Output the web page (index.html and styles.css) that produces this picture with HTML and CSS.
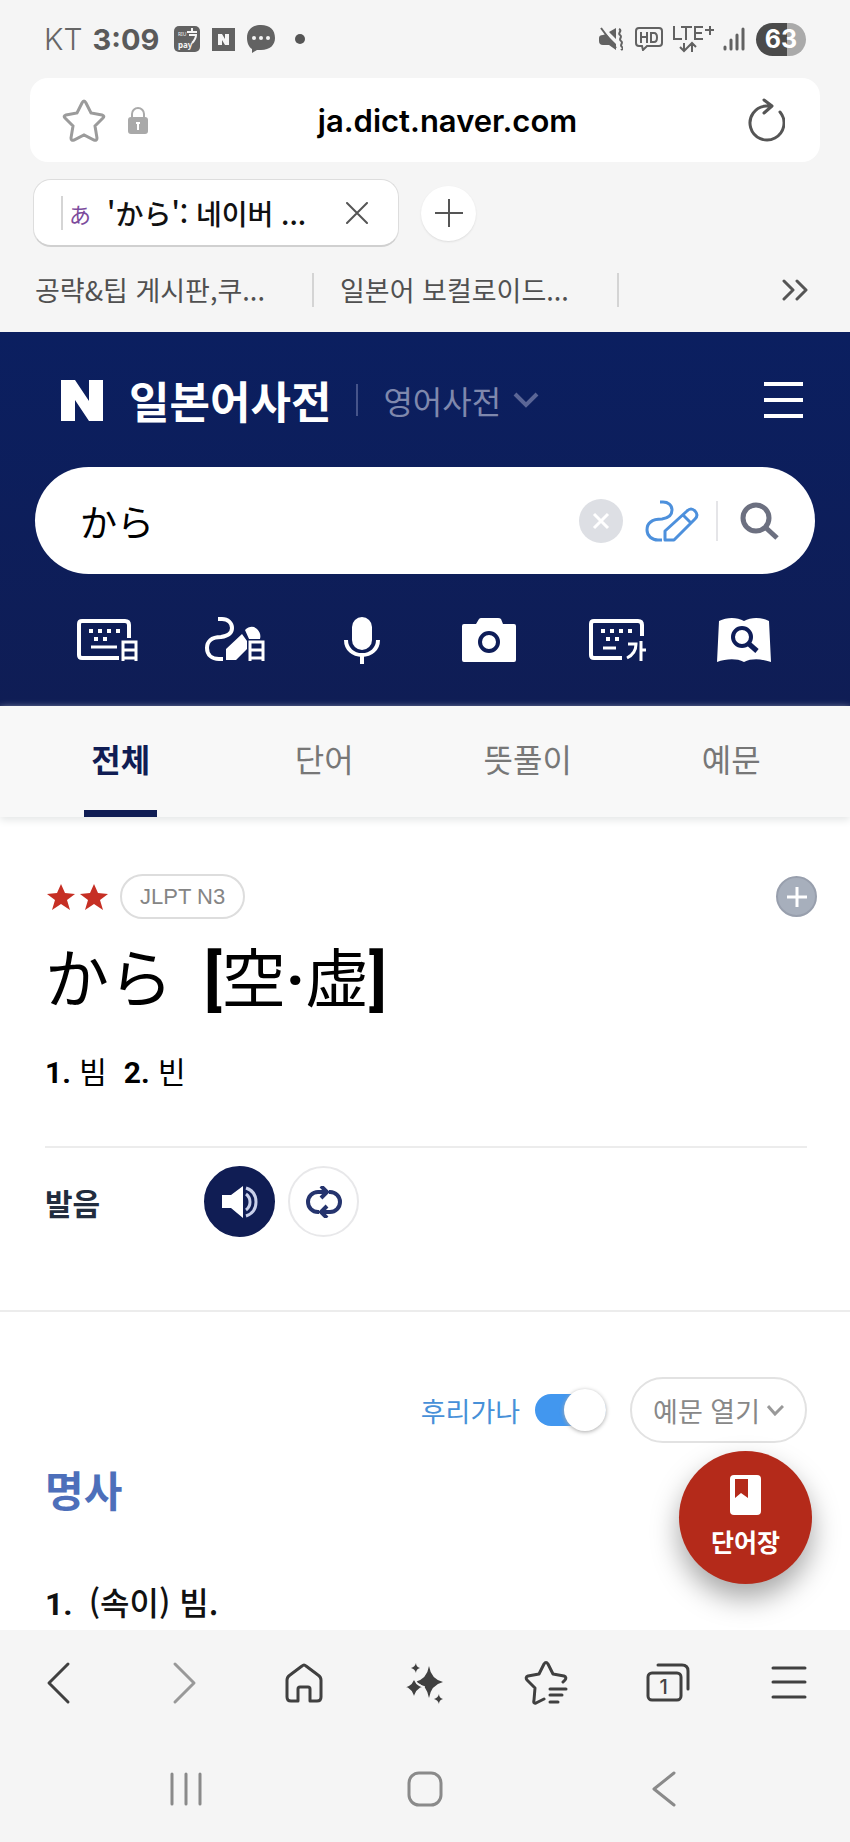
FILE: index.html
```html
<!DOCTYPE html>
<html lang="ko">
<head>
<meta charset="utf-8">
<meta name="viewport" content="width=device-width, initial-scale=1">
<title>'から': 네이버 일본어사전</title>
<link rel="stylesheet" href="styles.css">
</head>
<body>
<div class="screen">
  <div class="chrome">
    <div class="status">
      <span class="carrier">KT</span>
      <span class="time">3:09</span>
      <svg class="st-pay" width="26" height="26" viewBox="0 0 26 26"><rect width="26" height="26" rx="5" fill="#626262"/><path d="M13 6h10M18 2v4M15 9h7c0 4-2 6-4 8" fill="none" stroke="#f5f5f5" stroke-width="2"/><text x="4" y="10" class="pay-small">RIU</text><text x="4" y="22" class="pay-text">pay</text></svg>
      <svg class="st-n" width="23" height="23" viewBox="0 0 23 23"><path fill="#626262" d="M0 0h23v23H0z"/><path fill="#f5f5f5" d="M6 6h4l3 5V6h4v11h-4l-3-5v5H6z"/></svg>
      <svg class="st-chat" width="28" height="28" viewBox="0 0 28 28"><path fill="#626262" d="M14 0c9 0 14 5 14 13 0 7-5 12-14 12h-4l-5 3v-4C2 22 0 18 0 13 0 5 5 0 14 0z"/><g fill="#f5f5f5"><circle cx="7" cy="13" r="2"/><circle cx="14" cy="13" r="2"/><circle cx="21" cy="13" r="2"/></g></svg>
      <svg class="st-dot" width="10" height="10" viewBox="0 0 10 10"><circle cx="5" cy="5" r="5" fill="#555"/></svg>
      <span class="grow"></span>
      <svg width="24" height="24" viewBox="0 0 24 24" fill="#626262"><path d="M0 11q0-3 4-3l3-1 10 10v6l-7-5H4q-4 0-4-4zM10 5l7-4v11z"/><path d="M2 1l15 20M20 2c4 2-2 4 1 6s-2 4 1 6-2 4 1 6 0 2-1 3" fill="none" stroke="#626262" stroke-width="2"/></svg>
      <svg class="st-hd" width="28" height="24" viewBox="0 0 28 24"><path d="M4 1h20q3 0 3 3v12q0 3-3 3H12l-4 4-1-4H4q-3 0-3-3V4q0-3 3-3z" fill="none" stroke="#626262" stroke-width="2"/><path d="M6 5v11M6 10h6M12 5v11M16 6v9h3q3 0 3-4.500t-3-4.500z" fill="none" stroke="#626262" stroke-width="2"/></svg>
      <svg class="st-lte" width="43" height="28" viewBox="0 0 43 28" fill="none" stroke="#626262" stroke-width="2"><path d="M2 1v13h8M9 2h11M14 2v13M31 2h-8v12h8M23 8h7M33 5h9M38 1v9"/><path d="M12 18v8M8 22l4 4 4-4M20 27v-8M16 22l4-4 4 4"/></svg>
      <svg class="st-sig" width="22" height="24" viewBox="0 0 22 24" fill="none" stroke="#626262" stroke-width="3" stroke-linecap="round"><path d="M2 20v2M8 13v9M14 8v14M20 2v20"/></svg>
      <span class="battery">63</span>
    </div>

    <div class="address">
      <button class="plain" aria-label="북마크"><svg width="44" height="44" viewBox="0 0 44 44"><path d="M22 3q1 0 2 2l5 10 11 2q3 1 1 3l-8 8 2 12q0 3-3 2l-10-5-10 5q-3 1-3-2l2-12-8-8q-2-2 1-3l11-2 5-10q1-2 2-2z" fill="none" stroke="#9b9b9b" stroke-width="3"/></svg></button>
      <svg class="lock" width="20" height="28" viewBox="0 0 20 28"><path d="M4 12V8a6 6 0 0 1 12 0v4" fill="none" stroke="#aaa" stroke-width="2"/><rect y="11" width="20" height="17" rx="3" fill="#a9a9a9"/><path d="M8 16h4v2h-1v6H9v-6H8z" fill="#fff"/></svg>
      <a class="url" href="#">ja.dict.naver.com</a>
      <button class="plain" aria-label="새로고침"><svg width="38" height="44" viewBox="0 0 38 44" fill="none" stroke="#555" stroke-width="3" stroke-linecap="round" stroke-linejoin="round"><path d="M33 14a17 17 0 1 1-14-6h5M17 2l8 6-8 7"/></svg></button>
    </div>

    <div class="tabs">
      <div class="tab">
        <span class="fav" lang="ja">あ</span>
        <span class="tab-title">'から': 네이버 ...</span>
        <button class="plain" aria-label="탭 닫기"><svg width="22" height="22" viewBox="0 0 22 22" stroke="#555" stroke-width="2" stroke-linecap="round"><path d="M1 1l20 20M21 1L1 21"/></svg></button>
      </div>
      <button class="newtab" aria-label="새 탭"><svg width="28" height="28" viewBox="0 0 28 28" stroke="#555" stroke-width="2"><path d="M14 0v28M0 14h28"/></svg></button>
    </div>

    <div class="bookmarks">
      <a href="#">공략&amp;팁 게시판,쿠...</a>
      <a href="#">일본어 보컬로이드...</a>
      <button class="plain" aria-label="더보기"><svg width="26" height="22" viewBox="0 0 26 22" fill="none" stroke="#555" stroke-width="3" stroke-linecap="round" stroke-linejoin="round"><path d="M2 2l9 9-9 9M15 2l9 9-9 9"/></svg></button>
    </div>
  </div>

  <header class="head">
    <div class="brand">
      <svg width="42" height="41" viewBox="0 0 42 41"><path fill="#fff" d="M0 0h14l14 21V0h14v41H28L14 20v21H0z"/></svg>
      <h1>일본어사전</h1>
      <button class="plain other">영어사전 <svg width="26" height="18" viewBox="0 0 26 18" fill="none" stroke="#5b6696" stroke-width="4"><path d="M2 3l11 11L24 3"/></svg></button>
      <button class="plain menu" aria-label="메뉴"><svg width="39" height="36" viewBox="0 0 39 36" stroke="#fff" stroke-width="4"><path d="M0 2h39M0 18h39M0 34h39"/></svg></button>
    </div>
    <div class="search">
      <input type="text" value="から" aria-label="검색어" lang="ja">
      <button class="clear" aria-label="지우기"><svg width="18" height="18" viewBox="0 0 18 18" stroke="#fff" stroke-width="3"><path d="M2 2l14 14M16 2L2 16"/></svg></button>
      <button class="plain pen" aria-label="필기"><svg width="54" height="42" viewBox="0 0 54 42" fill="none" stroke="#4d90dc" stroke-width="3" stroke-linejoin="round"><path d="M15 2h3c5 0 9 3 9 8s-3 8-10 9C6 19 2 23 2 30c0 6 5 10 11 10h4"/><path d="M20 40v-9l22-20q4-4 8 0t0 8L29 40zM38 15l8 8"/></svg></button>
      <button class="plain go" aria-label="검색"><svg width="40" height="38" viewBox="0 0 40 38" fill="none" stroke="#6c7080" stroke-width="5"><circle cx="17" cy="16" r="13"/><path d="M26 25l12 11"/></svg></button>
    </div>
    <div class="tools">
      <button class="plain" aria-label="일본어 키보드"><svg width="62" height="48" viewBox="0 0 62 48" fill="none" stroke="#fff" stroke-width="4"><path d="M43 42H6q-3 0-3-3V8q0-3 3-3h43q4 0 4 4v13"/><path stroke-width="3" d="M15 31h26"/><path d="M13 15h4M22 15h4M31 15h4M40 15h4M18 23h4M27 23h4"/><path stroke-width="3" d="M47 45V26h13v19M47 34h13M47 42h13"/></svg></button>
      <button class="plain" aria-label="일본어 필기"><svg width="62" height="48" viewBox="0 0 62 48"><path d="M15 3h4c6 0 10 4 10 9s-4 8-11 9C8 21 4 26 4 32c0 7 5 11 12 11h4" fill="none" stroke="#fff" stroke-width="4"/><path fill="#fff" d="M23 33l16-15 5 7v8L33 44H23zM42 14c4-4 9-4 12-1s4 6 3 10H46z"/><path d="M47 45V26h13v19M47 34h13M47 42h13" fill="none" stroke="#fff" stroke-width="3"/></svg></button>
      <button class="plain" aria-label="음성 검색"><svg width="36" height="48" viewBox="0 0 36 48"><rect x="8" y="1" width="20" height="33" rx="10" fill="#fff"/><path d="M2 24c0 9 7 15 16 15s16-6 16-15M18 39v9" fill="none" stroke="#fff" stroke-width="4"/></svg></button>
      <button class="plain" aria-label="사진 검색"><svg width="54" height="48" viewBox="0 0 54 48"><path fill="#fff" d="M2 8h12l3-5q1-1 2-1h17q2 0 3 1l2 5h11q2 0 2 2v34q0 2-2 2H2q-2 0-2-2V10q0-2 2-2z"/><circle cx="27" cy="26" r="9" fill="#fff" stroke="#0e1d58" stroke-width="4"/></svg></button>
      <button class="plain" aria-label="한글 키보드"><svg width="58" height="48" viewBox="0 0 58 48" fill="none" stroke="#fff" stroke-width="4"><path d="M34 42H6q-3 0-3-3V8q0-3 3-3h44q4 0 4 4v11"/><path stroke-width="3" d="M15 32h13"/><path d="M13 15h4M22 15h4M31 15h4M40 15h4M18 23h4M27 23h4"/><path stroke-width="3" d="M40 28h8c0 6-3 11-9 14M53 25v20M53 34h5"/></svg></button>
      <button class="plain" aria-label="사전 검색"><svg width="54" height="48" viewBox="0 0 54 48"><path fill="#fff" d="M2 5c8-4 18-4 25 0 7-4 17-4 25 0l2 41c-9-3-19-4-27 0-8-4-18-3-27 0z"/><circle cx="25" cy="21" r="9" fill="none" stroke="#0e1d58" stroke-width="4"/><path d="M32 28l8 7" stroke="#0e1d58" stroke-width="5"/></svg></button>
    </div>
  </header>

  <nav class="sections">
    <a class="on" href="#">전체</a><a href="#">단어</a><a href="#">뜻풀이</a><a href="#">예문</a>
  </nav>

  <main>
    <section class="entry">
      <div class="meta">
        <svg width="63" height="26" viewBox="0 0 63 26" fill="#c62f24"><path d="M16 0l4 9 10 1-8 6 3 10-9-6-9 6 3-10-8-6 10-1zM49 0l4 9 10 1-8 6 3 10-9-6-9 6 3-10-8-6 10-1z"/></svg>
        <span class="level">JLPT N3</span>
        <button class="add" aria-label="단어장에 추가"><svg width="20" height="20" viewBox="0 0 20 20" stroke="#fff" stroke-width="3"><path d="M10 0v20M0 10h20"/></svg></button>
      </div>
      <h2 class="word" lang="ja">から<span class="kanji"><b>[</b>空<b>·</b>虚<b>]</b></span></h2>
      <p class="gloss"><b>1.</b> 빔&nbsp; <b>2.</b> 빈</p>
      <div class="sound">
        <span class="sound-label">발음</span>
        <button class="round play" aria-label="발음 듣기"><svg width="36" height="32" viewBox="0 0 36 32"><path fill="#fff" d="M0 9h9L21 0v32L9 22H0z"/><path d="M24 2c6 2 10 7 10 14s-4 12-10 14M24 8q4 3 4 8t-4 8" fill="none" stroke="#c9d0ea" stroke-width="3"/></svg></button>
        <button class="round" aria-label="반복 듣기"><svg width="36" height="32" viewBox="0 0 36 32" fill="none" stroke="#25346e" stroke-width="4"><path d="M13 26h-1a10 10 0 0 1 0-20h8M15 0l6 6-6 6M23 6h1a10 10 0 0 1 0 20h-8M21 20l-6 6 6 6"/></svg></button>
      </div>
    </section>

    <section class="senses">
      <div class="options">
        <label class="furigana">후리가나 <input type="checkbox" role="switch" checked></label>
        <button class="open">예문 열기 <svg width="17" height="11" viewBox="0 0 17 11" fill="none" stroke="#999" stroke-width="3"><path d="M1 1l7 8 8-8"/></svg></button>
      </div>
      <h3>명사</h3>
      <p class="sense"><span class="num">1.</span>(속이) 빔.</p>
      <button class="fab"><svg width="31" height="40" viewBox="0 0 31 40"><rect width="31" height="40" rx="4" fill="#fff"/><path d="M5 4h13v19l-7-5-6 5z" fill="#b42a1a"/></svg>단어장</button>
    </section>
  </main>

  <footer class="dock">
    <div class="toolbar">
      <button class="plain" aria-label="뒤로"><svg width="44" height="44" viewBox="0 0 44 44"><path d="M29 3L10 22l19 19"/></svg></button>
      <button class="plain dim" aria-label="앞으로"><svg width="44" height="44" viewBox="0 0 44 44"><path d="M15 3l19 19-19 19"/></svg></button>
      <button class="plain" aria-label="홈"><svg width="44" height="44" viewBox="0 0 44 44"><path d="M5 19q0-3 3-5L20 5q2-2 4 0l12 9q3 2 3 5v17q0 4-4 4h-7V28q0-2-2-2h-8q-2 0-2 2v12H9q-4 0-4-4z"/></svg></button>
      <button class="plain" aria-label="AI"><svg class="solid" width="44" height="44" viewBox="0 0 44 44"><path d="M26 5q2 13 14 16-12 3-14 16-2-13-14-16Q24 18 26 5z"/><path stroke="#f5f5f5" stroke-width="2" d="M11 15q1 9 10 11-8 2-10 13Q9 28 1 26q9-2 10-11z"/><path d="M13 2q0 4 4 5-4 1-4 5-1-4-5-5 4-1 5-5zM36 33q0 4 4 5-4 1-4 5-1-4-5-5 4-1 5-5z"/></svg></button>
      <button class="plain" aria-label="북마크 목록"><svg width="44" height="44" viewBox="0 0 44 44"><path d="M20 38l-8 4q-3 1-2-3l1-12-8-8q-2-3 1-4l11-2 5-10q2-3 4 0l5 10 11 2q3 1 1 4l-2 2M26 28h16M26 34h12M26 41h8"/></svg></button>
      <button class="plain count" aria-label="탭 1개"><svg width="44" height="44" viewBox="0 0 44 44"><rect x="2" y="12" width="33" height="27" rx="4"/><path d="M12 4h24q6 0 6 6v18"/></svg><span>1</span></button>
      <button class="plain" aria-label="메뉴"><svg width="44" height="44" viewBox="0 0 44 44"><path d="M6 7h32M6 21h32M6 36h32"/></svg></button>
    </div>
    <div class="sysnav">
      <button class="plain" aria-label="최근 앱"><svg width="36" height="36" viewBox="0 0 36 36"><path d="M4 3v30M18 3v30M32 3v30"/></svg></button>
      <button class="plain" aria-label="홈 화면"><svg width="36" height="36" viewBox="0 0 36 36"><rect x="2" y="2" width="32" height="32" rx="10"/></svg></button>
      <button class="plain" aria-label="이전"><svg width="36" height="36" viewBox="0 0 36 36"><path d="M28 2L8 18l20 16"/></svg></button>
    </div>
  </footer>
</div>
</body>
</html>
```
FILE: styles.css
```css
* { box-sizing: border-box; }
body {
  margin: 0;
  background: #fff;
  color: #000;
  font-family: "Noto Sans CJK KR", "Noto Sans CJK JP", sans-serif;
}
h1, h2, h3, p { margin: 0; }
a { color: inherit; text-decoration: none; }
button { font: inherit; color: inherit; cursor: pointer; }
svg { display: block; flex: none; }
[lang="ja"] { font-family: "Noto Sans CJK JP", sans-serif; }
.plain { display: flex; align-items: center; padding: 0; border: 0; background: none; }
.screen { display: flex; flex-direction: column; min-height: 100vh; }
.grow { flex: 1; }

/* browser chrome */
.chrome { background: #f5f5f5; }
.status {
  display: flex;
  align-items: center;
  height: 78px;
  padding: 0 44px;
  color: #666;
  font-family: Inter, sans-serif;
  font-size: 30px;
}
.carrier { margin-right: 10px; font-family: Inter, sans-serif; font-weight: 300; }
.time { margin-right: 15px; color: #5a5a5a; font-size: 29px; font-weight: 700; }
.st-n { margin-left: 12px; }
.st-chat { margin-left: 12px; }
.st-dot { margin-left: 20px; }
.st-hd { margin-left: 12px; }
.st-lte { margin-left: 9px; }
.st-sig { margin-left: 8px; }
.pay-text { fill: #f5f5f5; font: 700 8px "Noto Sans", sans-serif; }
.pay-small { fill: #f5f5f5; font: 5px "Noto Sans", sans-serif; }
.battery {
  width: 50px;
  height: 33px;
  margin-left: 11px;
  border-radius: 17px;
  background: linear-gradient(90deg, #4b4b4b 62%, #aaa 62%);
  color: #fff;
  font-size: 25px;
  font-weight: 700;
  line-height: 33px;
  text-align: center;
}
.address {
  display: flex;
  align-items: center;
  height: 84px;
  margin: 0 30px;
  padding: 0 35px 0 32px;
  border-radius: 18px;
  background: #fff;
}
.lock { margin-left: 22px; }
.url {
  flex: 1;
  font-family: Inter, sans-serif;
  font-size: 31px;
  font-weight: 600;
  text-align: center;
}
.tabs { display: flex; align-items: center; gap: 22px; padding: 17px 33px 0; }
.tab {
  display: flex;
  align-items: center;
  width: 366px;
  height: 68px;
  padding: 0 30px 0 27px;
  border: 1px solid #ddd;
  border-bottom: 2px solid #d0d0d0;
  border-radius: 18px;
  background: #fff;
}
.fav {
  padding-left: 6px;
  border-left: 2px solid #d5d5d5;
  color: #7c4b9c;
  font-size: 22px;
  line-height: 34px;
}
.tab-title { flex: 1; padding-left: 16px; font-size: 28px; font-weight: 500; white-space: nowrap; color: #111; }
.newtab {
  display: grid;
  place-items: center;
  width: 55px;
  height: 55px;
  padding: 0;
  border: 0;
  border-radius: 50%;
  background: #fff;
  box-shadow: 0 1px 2px #ddd;
}
.bookmarks {
  display: flex;
  align-items: center;
  height: 85px;
  padding: 0 42px 0 35px;
  color: #505050;
  font-size: 27px;
}
.bookmarks a { width: 279px; margin-right: 26px; border-right: 2px solid #d4d4d4; line-height: 34px; white-space: nowrap; }
.bookmarks button { margin-left: auto; }

/* dictionary header */
.head {
  padding: 35px 35px 42px;
  background: linear-gradient(#0b1f60, #0f1d55);
  color: #fff;
}
.brand { display: flex; align-items: center; height: 66px; padding: 0 12px 0 26px; }
h1 { margin-left: 26px; font-size: 44px; font-weight: 700; line-height: 66px; }
.other {
  gap: 12px;
  margin-left: 25px;
  padding-left: 25px;
  border-left: 2px solid #46548a;
  color: #7f88ad;
  font-size: 32px;
  line-height: 32px;
}
.menu { margin-left: auto; }
.search {
  display: flex;
  align-items: center;
  height: 107px;
  margin-top: 34px;
  padding: 0 36px 0 45px;
  border-radius: 54px;
  background: #fff;
}
.search input { flex: 1; min-width: 0; padding: 0; border: 0; outline: 0; background: none; color: #000; font-size: 37px; }
.clear {
  display: grid;
  place-items: center;
  width: 44px;
  height: 44px;
  padding: 0;
  border: 0;
  border-radius: 50%;
  background: #dddfe4;
}
.pen { margin-left: 22px; }
.go { height: 40px; margin-left: 17px; padding-left: 21px; border-left: 2px solid #e5e5e8; }
.tools { display: grid; grid-template-columns: repeat(6, 1fr); justify-items: center; padding: 42px 7px 0 8px; }

.sections {
  display: grid;
  grid-template-columns: repeat(4, 1fr);
  justify-items: center;
  height: 111px;
  padding: 0 17px 0 19px;
  background: #f8f8f8;
  box-shadow: 0 3px 8px #e4e6e6;
  color: #777;
  font-size: 32px;
  line-height: 104px;
}
.sections a { padding: 0 7px; }
.sections .on { border-bottom: 7px solid #101d54; color: #101d54; font-weight: 700; }

/* entry */
main { flex: 1; display: flex; flex-direction: column; }
.entry { padding: 57px 43px 73px 45px; border-bottom: 2px solid #ececec; }
.meta { display: flex; align-items: center; gap: 12px; margin-right: -10px; }
.level {
  height: 45px;
  padding: 0 18px;
  border: 2px solid #ddd;
  border-radius: 23px;
  color: #858585;
  font-family: "Liberation Sans", sans-serif;
  font-size: 22px;
  line-height: 41px;
}
.add {
  display: grid;
  place-items: center;
  width: 41px;
  height: 41px;
  margin-left: auto;
  padding: 0;
  border: 2px solid #989fad;
  border-radius: 50%;
  background: #a7afbc;
}
.word { margin-top: 8px; font-size: 64px; font-weight: 400; line-height: 94px; }
.word b { font-family: Roboto, sans-serif; font-weight: 700; line-height: 64px; }
.kanji { margin-left: 31px; }
.gloss { margin-top: 27px; font-size: 30px; line-height: 44px; }
.gloss b, .num { font-family: Roboto, sans-serif; font-weight: 700; }
.sound {
  display: flex;
  align-items: center;
  margin-top: 51px;
  padding-top: 18px;
  border-top: 2px solid #ececec;
}
.sound-label { flex: 0 0 159px; color: #222d3e; font-size: 30px; font-weight: 700; }
.round {
  display: grid;
  place-items: center;
  width: 71px;
  height: 71px;
  margin-right: 13px;
  padding: 0;
  border: 2px solid #e8e8ea;
  border-radius: 50%;
  background: #fff;
}
.play { border-color: #101d54; background: #101d54; }

.senses { position: relative; flex: 1; padding: 65px 43px 0 45px; }
.options { display: flex; align-items: center; justify-content: flex-end; gap: 24px; }
.furigana { display: flex; align-items: center; gap: 15px; color: #4790d8; font-size: 27px; }
.furigana input {
  display: flex;
  align-items: center;
  justify-content: flex-end;
  appearance: none;
  width: 71px;
  height: 32px;
  margin: 0;
  border-radius: 16px;
  background: #4297ef;
}
.furigana input::before {
  content: "";
  width: 42px;
  height: 42px;
  border-radius: 50%;
  background: #fff;
  box-shadow: 0 1px 4px #aaa;
}
.open {
  display: flex;
  align-items: center;
  gap: 7px;
  height: 66px;
  padding: 0 21px;
  border: 2px solid #e2e2e2;
  border-radius: 33px;
  background: #fff;
  color: #888;
  font-size: 27px;
}
h3 { margin-top: 16px; color: #4d6fba; font-size: 42px; font-weight: 700; line-height: 60px; }
.sense { margin-top: 58px; color: #111; font-size: 32px; font-weight: 500; line-height: 48px; }
.num { margin-right: 16px; }
.fab {
  position: absolute;
  right: 38px;
  bottom: 46px;
  display: flex;
  flex-direction: column;
  align-items: center;
  gap: 10px;
  width: 133px;
  height: 133px;
  padding: 24px 0 0;
  border: 0;
  border-radius: 50%;
  background: #b42a1a;
  box-shadow: 0 14px 28px #00000059;
  color: #fff;
  font-size: 25px;
  font-weight: 700;
  line-height: 32px;
}

/* bottom bars */
.dock { position: relative; height: 212px; background: #f5f5f5; }
.toolbar { display: flex; justify-content: space-between; padding: 31px 39px 0; }
.toolbar svg, .sysnav svg { fill: none; stroke: #404040; stroke-width: 3; stroke-linecap: round; stroke-linejoin: round; }
.toolbar .solid { fill: #404040; stroke: none; }
.toolbar .dim svg { stroke: #999; }
.count { display: grid; }
.count > * { grid-area: 1 / 1; }
.count span { padding: 8px 8px 0 0; color: #444; font-family: Inter, sans-serif; font-size: 20px; font-weight: 500; line-height: 36px; }
.sysnav { display: flex; justify-content: space-between; padding: 66px 168px 0; }
.sysnav svg { stroke: #8a8a8a; }
```
